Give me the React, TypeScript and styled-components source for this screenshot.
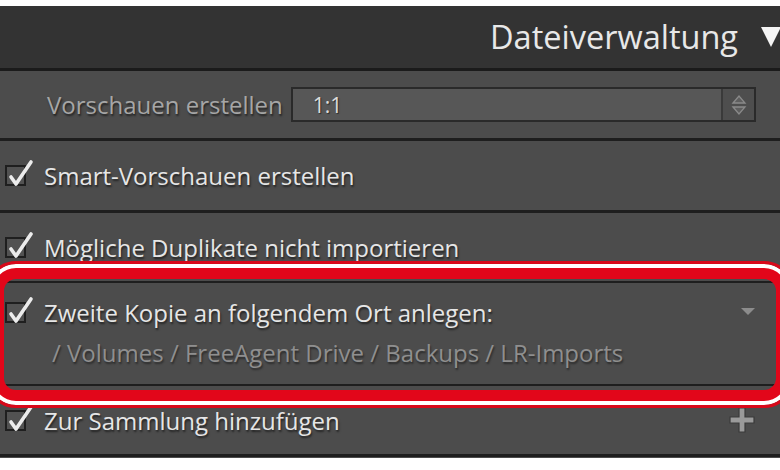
import React from "react";
import styled, { createGlobalStyle } from "styled-components";

const Global = createGlobalStyle`
  html, body { margin: 0; padding: 0; background: #ffffff; }
  body { font-family: "Open Sans", "Lato", sans-serif; }
`;

const Panel = styled.div`
  position: relative;
  margin-top: 6px;
  width: 780px;
  height: 452px;
  background: #4c4c4c;
  overflow: hidden;
`;

const Header = styled.div`
  height: 62px;
  background: #333333;
  display: flex;
  align-items: center;
  justify-content: flex-end;
  gap: 22px;
  border-bottom: 3px solid #1b1b1b;
`;

const Title = styled.div`
  font-size: 32.5px;
  color: #e8e8e8;
  margin-top: -2px;
`;

const Row = styled.div<{ $h: number; $b?: number }>`
  height: ${(p) => p.$h}px;
  display: flex;
  align-items: center;
  padding-left: 5px;
  padding-right: 24px;
  border-bottom: ${(p) => p.$b ?? 3}px solid #1e1e1e;
  box-sizing: content-box;
`;

const Block = styled.div<{ $h: number }>`
  height: ${(p) => p.$h}px;
  display: flex;
  flex-direction: column;
  padding: 12px 24px 0 5px;
  box-sizing: border-box;
  gap: 6px;
  border-bottom: 2px solid #1e1e1e;
`;

const Line = styled.div`
  display: flex;
  align-items: center;
  height: 34px;
`;

const Label = styled.span<{ $muted?: boolean }>`
  font-size: 24px;
  color: ${(p) => (p.$muted ? "#a6a6a6" : "#e6e6e6")};
  text-shadow: 1px 2px 2px rgba(0, 0, 0, 0.55);
  white-space: nowrap;
`;

const Path = styled.span`
  font-size: 24px;
  color: #8f8f8f;
  text-shadow: 1px 2px 2px rgba(0, 0, 0, 0.45);
  padding-left: 47px;
  white-space: nowrap;
`;

const PreviewLabel = styled(Label)`
  margin-left: 42px;
  width: 249px;
`;

const Select = styled.div`
  width: 475px;
  height: 35px;
  box-sizing: border-box;
  border: 2px solid #2a2a2a;
  background: #575757;
  display: flex;
  align-items: stretch;
`;

const SelectValue = styled.div`
  flex: 1;
  display: flex;
  align-items: center;
  padding-left: 20px;
  font-size: 21px;
  color: #dcdcdc;
  text-shadow: 1px 1px 1px rgba(0, 0, 0, 0.5);
`;

const Spinner = styled.div`
  width: 31px;
  border-left: 2px solid #3a3a3a;
  background: #4e4e4e;
  display: flex;
  align-items: center;
  justify-content: center;
`;

const CheckBox = styled.div`
  position: relative;
  width: 21px;
  height: 21px;
  box-sizing: border-box;
  border: 2px solid #1f1f1f;
  background: #525252;
  margin-right: 18px;
  flex-shrink: 0;
  svg {
    position: absolute;
    left: -2px;
    top: -10px;
  }
`;

const Spacer = styled.div`
  flex: 1;
`;

const Highlight = styled.div`
  position: absolute;
  left: -14px;
  right: -14px;
  top: 255px;
  height: 147px;
  box-sizing: border-box;
  border: 3px solid #d8091a;
  border-radius: 30px;
  box-shadow: inset 0 0 0 4px #ffffff, inset 0 0 0 15px #e2061a;
  pointer-events: none;
`;

const Check = () => (
  <svg width="30" height="32" viewBox="0 0 30 32">
    <path
      d="M6 20 L11 27 L26 5"
      fill="none"
      stroke="#ececec"
      strokeWidth="3.6"
      strokeLinecap="round"
      strokeLinejoin="round"
    />
  </svg>
);

const Box = () => (
  <CheckBox>
    <Check />
  </CheckBox>
);

export default function App() {
  return (
    <>
      <Global />
      <Panel>
        <Header>
          <Title>Dateiverwaltung</Title>
          <svg width="22" height="24" viewBox="0 0 22 24" style={{ marginRight: -2 }}>
            <path d="M1 2 L21 2 L11 22 Z" fill="#f4f4f4" />
          </svg>
        </Header>
        <Row $h={67}>
          <PreviewLabel $muted>Vorschauen erstellen</PreviewLabel>
          <Select>
            <SelectValue>1:1</SelectValue>
            <Spinner>
              <svg width="16" height="24" viewBox="0 0 16 24">
                <path d="M2 10 L8 3 L14 10 Z" fill="#5e5e5e" stroke="#8a8a8a" strokeWidth="1.3" />
                <path d="M2 14 L8 21 L14 14 Z" fill="#5e5e5e" stroke="#8a8a8a" strokeWidth="1.3" />
              </svg>
            </Spinner>
          </Select>
        </Row>
        <Row $h={69}>
          <Box />
          <Label>Smart-Vorschauen erstellen</Label>
        </Row>
        <Row $h={68} $b={2}>
          <Box />
          <Label>Mögliche Duplikate nicht importieren</Label>
        </Row>
        <Block $h={103}>
          <Line>
            <Box />
            <Label>Zweite Kopie an folgendem Ort anlegen:</Label>
            <Spacer />
            <svg width="16" height="10" viewBox="0 0 16 10">
              <path d="M1 1 L15 1 L8 8 Z" fill="#8c8c8c" />
            </svg>
          </Line>
          <Line>
            <Path>/ Volumes / FreeAgent Drive / Backups / LR-Imports</Path>
          </Line>
        </Block>
        <Row $h={68}>
          <Box />
          <Label>Zur Sammlung hinzufügen</Label>
          <Spacer />
          <svg width="28" height="28" viewBox="0 0 28 28">
            <path
              d="M11 2 H17 V11 H26 V17 H17 V26 H11 V17 H2 V11 H11 Z"
              fill="#9a9a9a"
              stroke="#3a3a3a"
              strokeWidth="1.2"
            />
          </svg>
        </Row>
        <Highlight />
      </Panel>
    </>
  );
}
